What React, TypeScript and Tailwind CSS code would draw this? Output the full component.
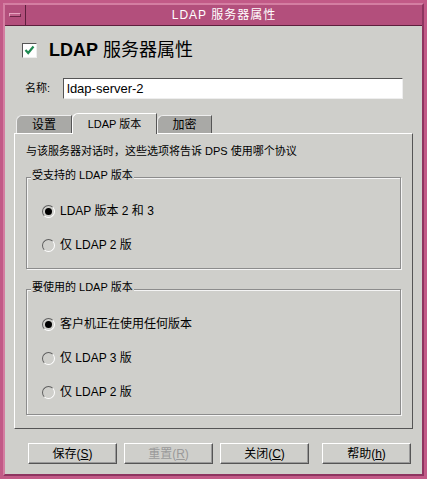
import React from 'react';

const font = { fontFamily: '"Liberation Sans", "Noto Sans CJK SC", sans-serif' };

function Radio({ checked, label }: { checked?: boolean; label: string }) {
  return (
    <div className="flex items-center gap-[5px] h-[16px]">
      <span className="relative w-[13px] h-[13px] rounded-full border border-t-[#5e5e5e] border-l-[#5e5e5e] border-r-white border-b-white bg-[#cfcfcb] flex items-center justify-center">
        {checked && <span className="w-[7px] h-[7px] rounded-full bg-black" />}
      </span>
      <span className="text-[12px] text-black leading-none">{label}</span>
    </div>
  );
}

function Group({ title, children, className }: { title: string; children: React.ReactNode; className?: string }) {
  return (
    <div className={'relative border border-[#8c8c8c] shadow-[inset_1px_1px_0_#f4f4f4,1px_1px_0_#f4f4f4] ' + (className ?? '')}>
      <span className="absolute -top-[8px] left-[4px] bg-[#cfcfcb] px-[1px] text-[11px] leading-none text-black">{title}</span>
      {children}
    </div>
  );
}

function Button({ label, mnemonic, disabled }: { label: string; mnemonic: string; disabled?: boolean }) {
  return (
    <div className="w-[89px] h-[21px] flex items-center justify-center border border-t-white border-l-white border-r-[#555] border-b-[#555] shadow-[inset_-1px_-1px_0_#9a9a9a]">
      <span className={'text-[12px] leading-none ' + (disabled ? 'text-[#9a9a9a]' : 'text-black')}>
        {label}(<span className="underline">{mnemonic}</span>)
      </span>
    </div>
  );
}

export default function App() {
  return (
    <div style={font} className="w-[427px] h-[479px] bg-[#c25a87] p-[3px] flex flex-col">
      <div className="flex-1 flex flex-col border-2 border-[#8e3560] border-t-[#d47ea2] border-l-[#d47ea2]">
        {/* title bar */}
        <div className="h-[21px] flex bg-[#b34f7c] border-b border-[#5e1f3d]">
          <div className="w-[21px] h-full border-r border-[#5e1f3d] flex items-center justify-center">
            <span className="w-[12px] h-[4px] border border-t-[#e7a3c0] border-l-[#e7a3c0] border-r-[#6b2446] border-b-[#6b2446] bg-[#c0608a]" />
          </div>
          <div className="flex-1 flex items-center justify-center text-white text-[12px] tracking-[1px]">LDAP 服务器属性</div>
        </div>

        {/* body */}
        <div className="flex-1 bg-[#cfcfcb] flex flex-col px-[9px]">
          <div className="flex items-center gap-[12px] mt-[14px] pl-[8px] h-[20px]">
            <span className="w-[15px] h-[15px] bg-white border border-t-[#555] border-l-[#555] border-r-[#eee] border-b-[#eee] flex items-center justify-center">
              <svg width="11" height="10" viewBox="0 0 11 10">
                <path d="M1.5 5 L4.2 8 L9.5 1.5" fill="none" stroke="#1e8a52" strokeWidth="2.2" />
              </svg>
            </span>
            <span className="text-[18px] text-black leading-none">
              <span className="font-bold">LDAP</span> 服务器属性
            </span>
          </div>

          <div className="flex items-center mt-[18px] pl-[11px] h-[21px]">
            <span className="text-[11px] w-[38px] text-black">名称:</span>
            <div className="flex-1 mr-[10px] h-[21px] bg-white border border-t-[#555] border-l-[#555] border-r-[#eee] border-b-[#eee] flex items-center pl-[3px] text-[13px] text-black">
              ldap-server-2
            </div>
          </div>

          {/* tabs */}
          <div className="flex items-end h-[22px] mt-[12px] pl-[2px] relative z-10">
            <div className="w-[56px] h-[18px] bg-[#a9a9a6] border border-t-[#eee] border-l-[#eee] border-r-[#555] border-b-0 rounded-tl-[6px] flex items-center justify-center text-[12px] text-black">设置</div>
            <div className="w-[85px] h-[21px] -mb-[1px] bg-[#cfcfcb] border border-t-white border-l-white border-r-[#555] border-b-0 rounded-tl-[6px] flex items-center justify-center text-[11px] text-black">LDAP 版本</div>
            <div className="w-[55px] h-[18px] bg-[#a9a9a6] border border-t-[#eee] border-l-[#eee] border-r-[#555] border-b-0 rounded-tl-[6px] flex items-center justify-center text-[12px] text-black">加密</div>
          </div>

          {/* tab panel */}
          <div className="h-[296px] border border-t-white border-l-white border-r-[#555] border-b-[#555] flex flex-col px-[11px]">
            <div className="text-[11px] text-black mt-[12px] leading-none">与该服务器对话时，这些选项将告诉 DPS 使用哪个协议</div>
            <Group title="受支持的 LDAP 版本" className="mt-[20px] h-[92px] pl-[15px] pt-[25px]">
              <div className="flex flex-col gap-[18px]">
                <Radio checked label="LDAP 版本 2 和 3" />
                <Radio label="仅 LDAP 2 版" />
              </div>
            </Group>
            <Group title="要使用的 LDAP 版本" className="mt-[20px] h-[126px] pl-[15px] pt-[26px]">
              <div className="flex flex-col gap-[18px]">
                <Radio checked label="客户机正在使用任何版本" />
                <Radio label="仅 LDAP 3 版" />
                <Radio label="仅 LDAP 2 版" />
              </div>
            </Group>
          </div>

          {/* buttons */}
          <div className="flex mt-[14px] pl-[14px]">
            <Button label="保存" mnemonic="S" />
            <div className="w-[7px]" />
            <Button label="重置" mnemonic="R" disabled />
            <div className="w-[7px]" />
            <Button label="关闭" mnemonic="C" />
            <div className="w-[13px]" />
            <Button label="帮助" mnemonic="h" />
          </div>
        </div>
      </div>
    </div>
  );
}
